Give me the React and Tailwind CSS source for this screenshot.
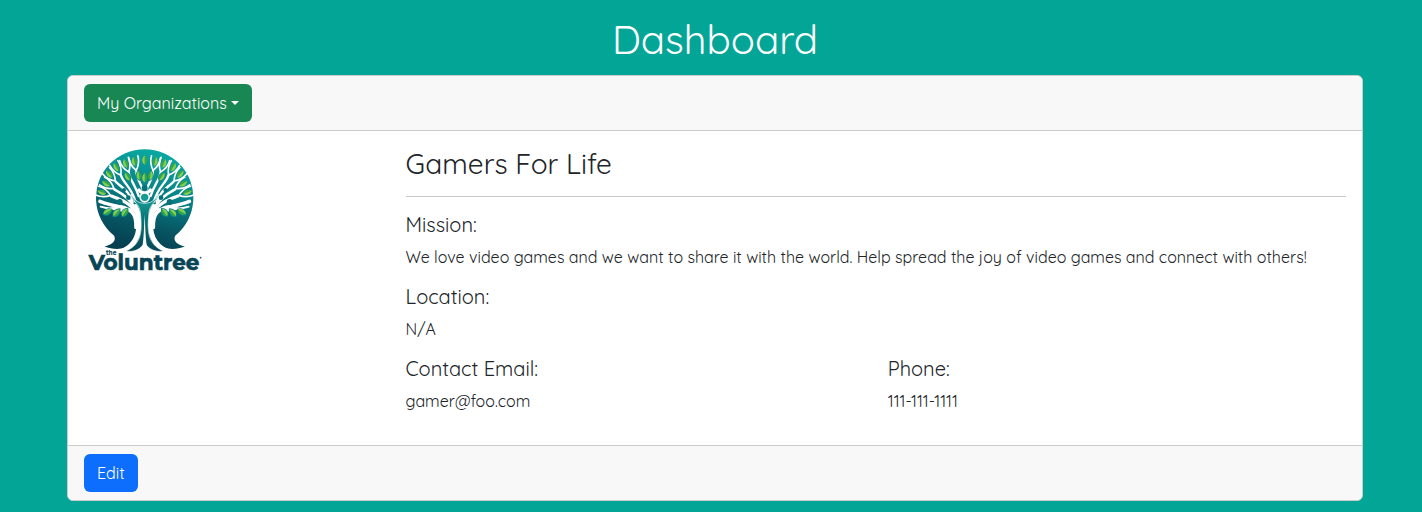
const limbs = [
  ['M168 262 C170 218 152 206 118 200 C98 196 80 192 60 184', 11],
  ['M94 168 C120 178 152 188 172 222', 9],
  ['M103 148 C125 160 156 178 174 222', 8],
  ['M107 125 C128 145 146 152 158 186', 7],
  ['M123 106 C130 130 154 140 166 184', 7],
  ['M146 97 C150 120 166 135 176 168', 7],
  ['M169 92 C170 118 182 128 188 148', 7],
  ['M160 205 C136 220 120 208 96 206', 8],
  ['M112 202 C98 208 82 206 62 200', 6],
];

// Outer leaves sit inside the fork of a branch.
const outerLeaves = [
  [163, 65, -12], [137, 71, -20], [109, 82, -30], [88, 103, -42],
  [79, 131, -58], [66, 157, -70],
];

const innerLeaves = [
  [143, 110, -32], [177, 107, -8], [82, 216, 60], [109, 219, 42], [134, 218, 34],
];

const heads = [[119, 186, 9], [145, 173, 7], [132, 150, 6]];

const leafShape = 'M0 -15 C10 -6 10 7 0 13 C-10 7 -10 -6 0 -15 Z';
const forkShape = 'M-14 -15 C-15 4 -9 16 0 27 C9 16 15 4 14 -15';

function Leaf({ at: [x, y, angle] }) {
  return <path d={leafShape} transform={`translate(${x} ${y}) rotate(${angle})`} fill="url(#leaf)" />;
}

function CrownHalf() {
  return (
    <g>
      <g fill="none" stroke="#fff" strokeLinecap="round" strokeLinejoin="round">
        {limbs.map(([d, w]) => <path key={d} d={d} strokeWidth={w} />)}
        {outerLeaves.map(([x, y, angle]) => (
          <path key={`${x}-${y}`} d={forkShape} transform={`translate(${x} ${y}) rotate(${angle})`} strokeWidth="5" />
        ))}
        <path d="M166 200 C180 225 182 278 162 306 C152 320 140 330 118 338" strokeWidth="15" />
      </g>
      {heads.map(([x, y, r]) => (
        <circle key={`${x}-${y}`} cx={x} cy={y} r={r} fill="#07717a" />
      ))}
      {outerLeaves.map((leaf) => <Leaf key={leaf.join()} at={leaf} />)}
      {innerLeaves.map((leaf) => (
        <g key={leaf.join()}>
          <path d={leafShape} transform={`translate(${leaf[0]} ${leaf[1]}) rotate(${leaf[2]})`} stroke="#07858a" strokeWidth="5" />
          <Leaf at={leaf} />
        </g>
      ))}
    </g>
  );
}

function Logo() {
  return (
    <svg className="block h-34 w-31" viewBox="12 21 372 408" role="img" aria-label="The Voluntree">
      <defs>
        <linearGradient id="crown" x1="0.65" y1="0" x2="0.4" y2="1">
          <stop offset="0" stopColor="#0aaba3" />
          <stop offset="0.45" stopColor="#087f85" />
          <stop offset="0.75" stopColor="#065562" />
          <stop offset="1" stopColor="#063f50" />
        </linearGradient>
        <linearGradient id="figure" x1="0" y1="0" x2="0" y2="1">
          <stop offset="0" stopColor="#16a79d" />
          <stop offset="0.45" stopColor="#087276" />
          <stop offset="1" stopColor="#064657" />
        </linearGradient>
        <linearGradient id="leaf" x1="0" y1="0" x2="1" y2="0">
          <stop offset="0.4" stopColor="#83cf50" />
          <stop offset="0.6" stopColor="#35a548" />
        </linearGradient>
      </defs>
      <path
        d="M101 286 A146 146 0 1 1 287 286 C276 301 293 316 315 319 C286 331 254 331 230 310 L158 310 C134 331 102 331 73 319 C95 316 112 301 101 286 Z"
        fill="url(#crown)"
      />
      <CrownHalf />
      <g transform="translate(388 0) scale(-1 1)"><CrownHalf /></g>
      <path d="M178 310 H210" stroke="#fff" strokeWidth="34" />
      <path
        d="M153 162 C164 184 180 190 194 190 C208 190 224 184 235 162 C230 186 208 194 207 218 C203 256 202 290 220 311 C228 321 238 328 251 333 C228 338 204 328 194 307 C184 328 160 338 137 333 C150 328 160 321 168 311 C186 290 185 256 181 218 C180 194 158 186 153 162 Z"
        fill="url(#figure)"
        stroke="#fff"
        strokeWidth="2"
      />
      <path d="M194 222 C192 260 192 290 187 322 L201 322 C196 290 196 260 194 222 Z" fill="#fff" />
      <path d="M177 150 C184 162 204 162 211 150" fill="none" stroke="#fff" strokeWidth="10" strokeLinecap="round" />
      <circle cx="194" cy="172" r="16" fill="#fff" />
      <circle cx="194" cy="172" r="11" fill="#139b94" />
      <circle cx="194" cy="144" r="9" fill="#07717a" />
      <Leaf at={[194, 61, 0]} />
      <Leaf at={[194, 114, 0]} />
      <g fill="#074455" fontFamily="Montserrat, Inter, sans-serif" fontWeight="700" stroke="#074455">
        <text x="78" y="344" fontSize="23" strokeWidth="0.5" textLength="31" lengthAdjust="spacingAndGlyphs">the</text>
        <text x="26" y="390" fontSize="65" strokeWidth="2" textLength="332" lengthAdjust="spacingAndGlyphs">Voluntree</text>
        <circle cx="362" cy="353" r="2" />
      </g>
    </svg>
  );
}

function Field({ label, value, valueClass = '' }) {
  return (
    <div className="min-w-0 flex-1">
      <h5 className="mb-2 text-xl leading-6">{label}</h5>
      <p className={`mb-4 text-base leading-6 ${valueClass}`}>{value}</p>
    </div>
  );
}

export default function App() {
  return (
    <main className="min-h-screen bg-[#03a696] pt-[15px] pl-[67px] font-['Quicksand','Lato',sans-serif] text-[#212529]">
      <div className="w-[1296px]">
        <h1 className="mb-3 text-center text-[40px] leading-12 text-white">Dashboard</h1>
        <section className="overflow-hidden rounded-md border border-[#cccccc] bg-white">
          <header className="border-b border-[#cccccc] bg-[#f8f8f8] px-4 py-2">
            <button className="flex h-[38px] w-[168px] items-center rounded-md bg-[#198754] px-[13px] text-white">
              <span className="whitespace-nowrap">My Organizations</span>
              <svg className="ml-auto h-1 w-2" viewBox="0 0 8 4" fill="currentColor"><path d="M0 0h8L4 4z" /></svg>
            </button>
          </header>
          <div className="flex h-[314px] p-4">
            <div className="w-[321.5px] shrink-0"><Logo /></div>
            <div className="min-w-0 flex-1">
              <h3 className="text-[28px] leading-[34px]">Gamers For Life</h3>
              <hr className="mt-[15px] mb-4 border-[#c8c9ca]" />
              <Field label="Mission:" value="We love video games and we want to share it with the world. Help spread the joy of video games and connect with others!" valueClass="whitespace-nowrap" />
              <Field label="Location:" value="N/A" />
              <div className="flex gap-6">
                <Field label="Contact Email:" value="gamer@foo.com" />
                <Field label="Phone:" value="111-111-1111" />
              </div>
            </div>
          </div>
          <footer className="border-t border-[#cccccc] bg-[#f8f8f8] px-4 py-2">
            <button className="flex h-[38px] w-[54px] items-center rounded-md bg-[#0d6efd] px-[13px] text-white">Edit</button>
          </footer>
        </section>
      </div>
    </main>
  );
}
